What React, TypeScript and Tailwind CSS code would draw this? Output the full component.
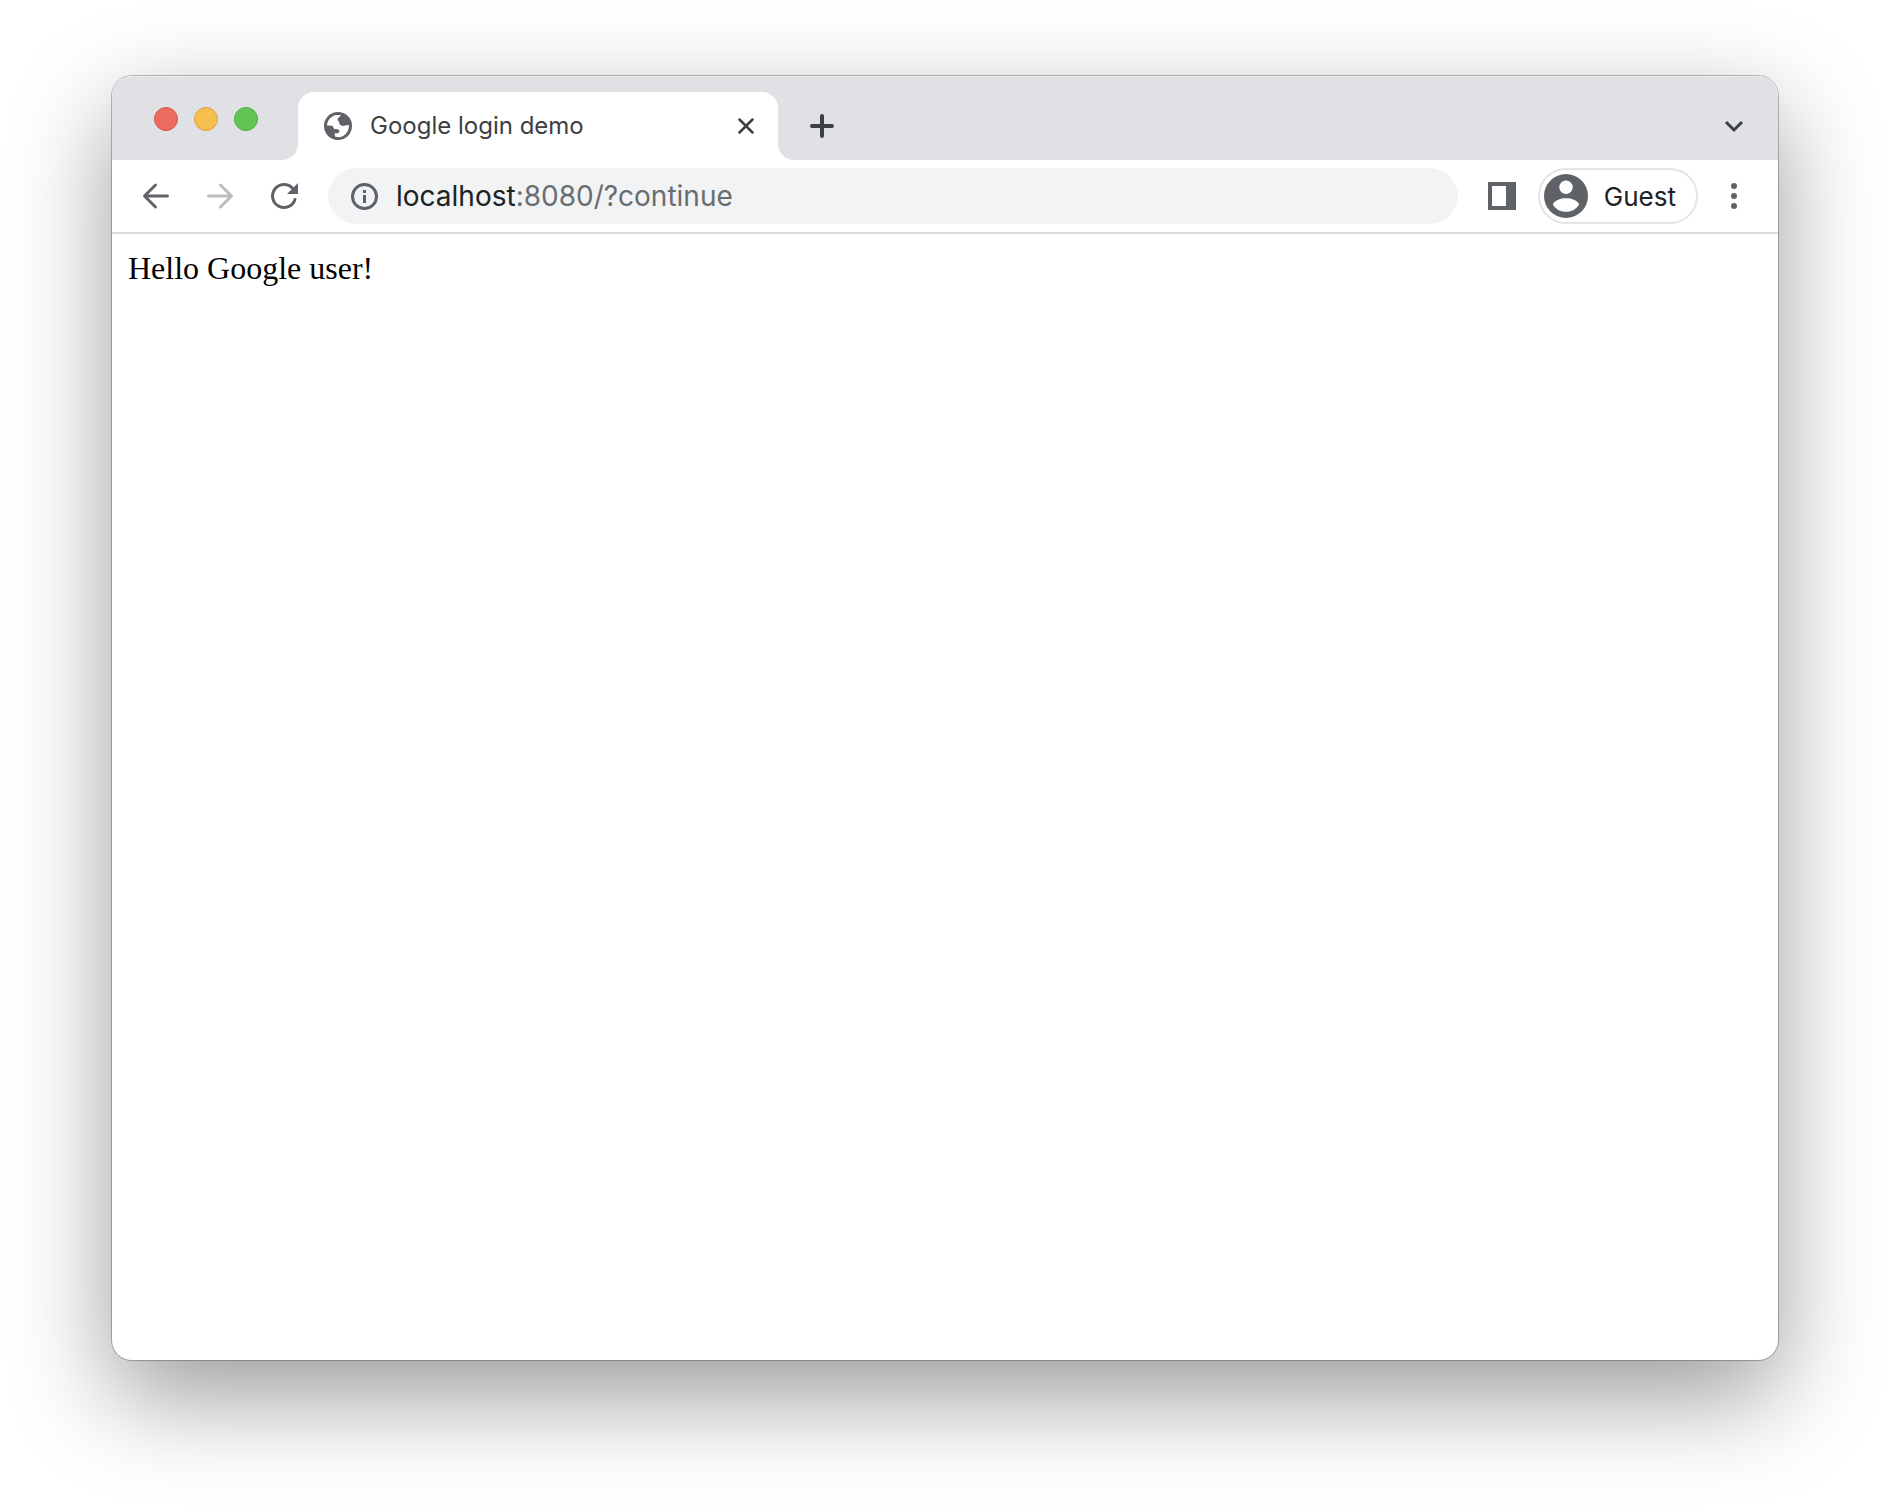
import type React from "react"

const TabStrip: React.FC = () => {
  return (
    <div className="flex h-[84px] border-t border-[#eeeef0] bg-white">
      <div className="flex items-center gap-4 rounded-br-2xl bg-[#dfe1e5] pt-px pr-10 pl-[42px]">
        <button type="button" aria-label="Close window" className="size-6 rounded-full border border-[#d8554a] bg-[#ed6a5e]" />
        <button type="button" aria-label="Minimize window" className="size-6 rounded-full border border-[#dba33c] bg-[#f5bf4f]" />
        <button type="button" aria-label="Zoom window" className="size-6 rounded-full border border-[#4dab3d] bg-[#61c554]" />
      </div>

      <div className="flex w-[480px] items-end bg-[#dfe1e5]">
        <div className="flex h-[68px] flex-1 items-center rounded-t-2xl bg-white pr-6 pl-[26px]">
          <GlobeIcon />
          <span className="ml-[18px] flex-1 text-2xl text-[#3c4043]">Google login demo</span>
          <button type="button" aria-label="Close tab">
            <svg viewBox="0 0 16 16" className="size-4" fill="none" stroke="#3c4043" strokeWidth="2.5" strokeLinecap="round">
              <path d="M1.500 1.500l13 13M14.500 1.500l-13 13" />
            </svg>
          </button>
        </div>
      </div>

      <div className="flex flex-1 items-end rounded-bl-2xl bg-[#dfe1e5] px-8">
        <div className="flex h-[68px] flex-1 items-center justify-between">
          <button type="button" aria-label="New tab">
            <svg viewBox="0 0 24 24" className="size-6" fill="none" stroke="#3c4043" strokeWidth="4" strokeLinecap="round">
              <path d="M12 2v20M2 12h20" />
            </svg>
          </button>
          <button type="button" aria-label="Search tabs">
            <svg viewBox="0 0 24 24" className="size-6" fill="none" stroke="#3c4043" strokeWidth="3">
              <path d="M4 8l8 8 8-8" />
            </svg>
          </button>
        </div>
      </div>
    </div>
  )
}

const GlobeIcon: React.FC = () => (
  <svg viewBox="0 0 28 28" className="size-7" aria-hidden="true">
    <circle cx="14" cy="14" r="14" fill="#5f6368" />
    <path
      d="M3 13.600C3.200 8.500 6.800 4.200 12 3l5 .1C16 4.800 13.600 5.600 13.600 7.600c0 1.600 1.600 1.600 1.600 3.200 0 1.800 1.600 3 3.800 3.200 2.200.1 3.600-1.200 5.900-.8C25.200 19.400 20.500 25 14.500 25.200l-3.700-.6v-3.400h2.800c1.600-.2 2.200-1.800 1.400-3.200-.8-1.200-2.800-.4-4.400-1-1.800-.8-1-3-2.600-3.200z"
      fill="#fff"
    />
  </svg>
)

const Toolbar: React.FC = () => {
  return (
    <div className="flex h-[74px] items-center border-b-2 border-[#dadbdd] bg-white pr-8 pl-7">
      <div className="flex gap-8">
        <button type="button" aria-label="Back">
          <svg
            viewBox="0 0 32 32"
            className="size-8"
            fill="none"
            stroke="#5f6368"
            strokeWidth="3"
            strokeLinecap="round"
            strokeLinejoin="round"
          >
            <path d="M27.500 16H5M15.500 5L4.500 16l11 11" />
          </svg>
        </button>
        <button type="button" aria-label="Forward">
          <svg
            viewBox="0 0 32 32"
            className="size-8"
            fill="none"
            stroke="#babcbe"
            strokeWidth="3"
            strokeLinecap="round"
            strokeLinejoin="round"
          >
            <path d="M4.500 16H27M16.500 5l11 11-11 11" />
          </svg>
        </button>
        <button type="button" aria-label="Reload">
          <svg viewBox="0 0 32 32" className="size-8" fill="none">
            <path d="M24.500 8.200A11.500 11.500 0 1 0 27 19.500" stroke="#5f6368" strokeWidth="3" strokeLinecap="round" />
            <path d="M30 3v11H19z" fill="#5f6368" />
          </svg>
        </button>
      </div>

      <div className="ml-7 flex h-14 flex-1 items-center rounded-full bg-[#f1f3f4] px-[22px]">
        <InfoIcon />
        <a href="#" className="ml-[18px] text-[28px] text-[#202124]">
          localhost<span className="text-[#6a6d70]">:8080/?continue</span>
        </a>
      </div>

      <button type="button" aria-label="Side panel" className="ml-[30px]">
        <svg viewBox="0 0 28 28" className="size-7" aria-hidden="true">
          <path d="M0 0h28v28H0zM4 4v20h14V4z" fill="#5f6368" fillRule="evenodd" />
        </svg>
      </button>
      <button type="button" className="ml-[22px] flex h-14 items-center rounded-full border-2 border-[#e3e4e6] pr-5 pl-1">
        <AvatarIcon />
        <span className="ml-4 text-[26px] text-[#202124]">Guest</span>
      </button>
      <button type="button" aria-label="Menu" className="ml-6">
        <svg viewBox="0 0 24 32" className="h-8 w-6" fill="#5f6368">
          <circle cx="12" cy="6" r="3" />
          <circle cx="12" cy="16" r="3" />
          <circle cx="12" cy="26" r="3" />
        </svg>
      </button>
    </div>
  )
}

const InfoIcon: React.FC = () => (
  <svg viewBox="0 0 28 28" className="size-7" aria-hidden="true">
    <circle cx="14.500" cy="14.500" r="12" fill="none" stroke="#5f6368" strokeWidth="3" />
    <path d="M13 8h3v3h-3zM13 13h3v8h-3z" fill="#5f6368" />
  </svg>
)

const AvatarIcon: React.FC = () => (
  <svg viewBox="0 0 44 44" className="size-11" aria-hidden="true">
    <circle cx="22" cy="22" r="22" fill="#5f6368" />
    <circle cx="22" cy="13.300" r="6.700" fill="#fff" />
    <path d="M8.800 30.200c2.200-4.200 8-6 13.200-6s11 1.800 13.200 6c-2.600 4.900-7.600 7.600-13.200 7.600s-10.600-2.700-13.200-7.600z" fill="#fff" />
  </svg>
)

const App: React.FC = () => {
  return (
    <div className="flex min-h-screen flex-col bg-white px-28 pt-[76px] pb-[148px] font-['Inter',sans-serif]">
      <div className="flex flex-1 flex-col overflow-hidden rounded-[20px] bg-white shadow-[0_0_0_1px_rgba(0,0,0,0.25),0_36px_100px_rgba(0,0,0,0.4)]">
        <TabStrip />
        <Toolbar />
        <main className="p-4 font-['Liberation_Serif',serif] text-[32px] leading-9 text-black">Hello Google user!</main>
      </div>
    </div>
  )
}

export default App
